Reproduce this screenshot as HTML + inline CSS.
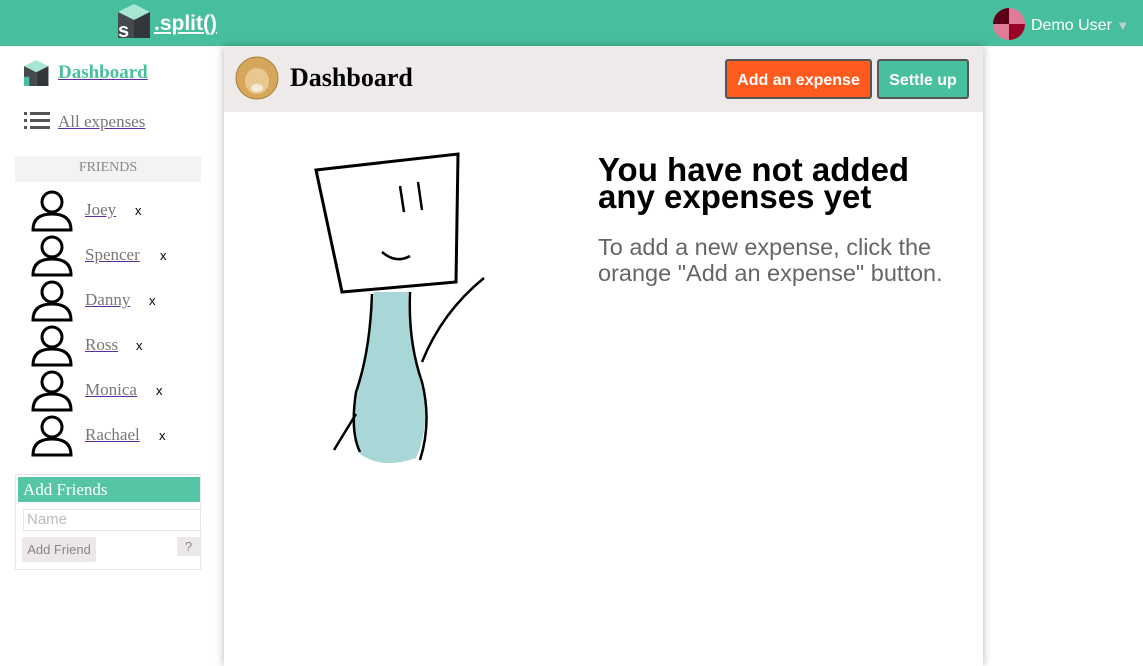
<!DOCTYPE html>
<html><head><meta charset="utf-8"><style>
*{margin:0;padding:0;box-sizing:border-box}
body{width:1143px;height:649px;overflow:hidden;background:#fff;font-family:"Liberation Serif",serif;position:relative}
.top{position:absolute;left:0;top:0;width:1143px;height:46px;background:#47bf9e}
.logo{position:absolute;left:118px;top:4px}
.brand{position:absolute;left:154px;top:12px;color:#fff;font:bold 21px "Liberation Sans",sans-serif;text-decoration:underline}
.user{position:absolute;left:993px;top:8px;color:#fff;font:16px "Liberation Sans",sans-serif}
.user span{position:absolute;left:38px;top:9px;white-space:nowrap}
.side a{color:#777;text-decoration:underline;text-decoration-color:#5a2ca0}
.dash{position:absolute;left:58px;top:62px;font-size:19px;font-weight:bold;color:#48bf9e!important}
.allexp{position:absolute;left:58px;top:112px;font-size:17px}
.fh{position:absolute;left:15px;top:156px;width:186px;height:26px;background:#f3f3f3;color:#888;font-size:14px;text-align:center;line-height:24px}
.fr{position:absolute;left:30px;height:45px}
.fr svg{position:absolute;left:0;top:0}
.fr a{position:absolute;left:55px;top:12px;font-size:17px}
.fr b{position:absolute;top:15px;font:13px "Liberation Sans",sans-serif;color:#000}
.af{position:absolute;left:15px;top:474px;width:186px;height:96px;border:1px solid #e8e8e8}
.afh{position:absolute;left:2px;top:2px;width:182px;height:25px;background:#55c5a5;color:#fff;font-size:17px;padding-left:5px;line-height:25px}
.inp{position:absolute;left:7px;top:34px;width:178px;height:22px;border:1px solid #e5e5e5;color:#bbb;font:15px "Liberation Sans",sans-serif;padding-left:3px;line-height:20px}
.btn{position:absolute;background:#ece8e7;color:#888;font:13px "Liberation Sans",sans-serif;border-radius:2px}
.main{position:absolute;left:224px;top:46px;width:759px;height:620px;background:#fff;box-shadow:0 0 8px rgba(0,0,0,.3)}
.mh{position:absolute;left:0;top:0;width:759px;height:66px;background:#eeeae9}
.mh h1{position:absolute;left:66px;top:17px;font-size:26px;font-weight:bold}
.b1{position:absolute;left:501px;top:13px;width:147px;height:40px;background:#ff5b1f;border:2px solid #555;border-radius:3px;color:#fff;font:bold 16px "Liberation Sans",sans-serif;text-align:center;line-height:39px}
.b2{position:absolute;left:653px;top:13px;width:92px;height:40px;background:#48bf9e;border:2px solid #555;border-radius:3px;color:#fff;font:bold 16px "Liberation Sans",sans-serif;text-align:center;line-height:39px}
.t1{position:absolute;left:374px;top:110px;font:bold 33px/27px "Liberation Sans",sans-serif;color:#000;white-space:nowrap}
.t2{position:absolute;left:374px;top:188px;font:23.5px/26px "Liberation Sans",sans-serif;color:#666;white-space:nowrap}
</style></head><body>
<div class="top">
<svg class="logo" width="34" height="34" viewBox="0 0 34 34"><polygon points="0,8 16,0 32,8 16,16" fill="#a8e6d4"/><polygon points="0,8 16,16 16,34 0,34" fill="#454a4f"/><polygon points="16,16 32,8 32,34 16,34" fill="#33373b"/><text x="0" y="33" font-family="Liberation Sans" font-weight="bold" font-size="20" fill="#fff">s</text></svg>
<div class="brand">.split()</div>
<div class="user"><svg width="32" height="32" viewBox="0 0 32 32"><clipPath id="c"><circle cx="16" cy="16" r="16"/></clipPath><g clip-path="url(#c)"><rect width="32" height="32" fill="#e07b98"/><rect width="16" height="16" fill="#5a0018"/><rect x="16" y="16" width="16" height="16" fill="#9b0025"/></g></svg><span>Demo User <span style="position:static;color:#ccc;font-size:13px">▼</span></span></div>
</div>
<div class="side">
<svg style="position:absolute;left:24px;top:59px" width="26" height="28" viewBox="0 0 34 34"><polygon points="0,8 16,0 32,8 16,16" fill="#a8e6d4"/><polygon points="0,8 16,16 16,34 0,34" fill="#454a4f"/><polygon points="16,16 32,8 32,34 16,34" fill="#33373b"/><rect x="0" y="22" width="7" height="12" fill="#48bf9e"/></svg>
<a class="dash">Dashboard</a>
<svg style="position:absolute;left:24px;top:111px" width="26" height="20"><g fill="#555"><rect x="0" y="1" width="3" height="3"/><rect x="0" y="8" width="3" height="3"/><rect x="0" y="15" width="3" height="3"/><rect x="6" y="1" width="20" height="3"/><rect x="6" y="8" width="20" height="3"/><rect x="6" y="15" width="20" height="3"/></g></svg>
<a class="allexp">All expenses</a>
<div class="fh">FRIENDS</div>
<div class="fr" style="top:188px"><svg width="44" height="44" viewBox="0 0 44 44"><circle cx="22" cy="14" r="10" fill="none" stroke="#000" stroke-width="3"/><path d="M3 42 Q3 26 22 26 Q41 26 41 42 Z" fill="none" stroke="#000" stroke-width="3"/></svg><a>Joey</a><b style="left:105px">x</b></div>
<div class="fr" style="top:233px"><svg width="44" height="44" viewBox="0 0 44 44"><circle cx="22" cy="14" r="10" fill="none" stroke="#000" stroke-width="3"/><path d="M3 42 Q3 26 22 26 Q41 26 41 42 Z" fill="none" stroke="#000" stroke-width="3"/></svg><a>Spencer</a><b style="left:130px">x</b></div>
<div class="fr" style="top:278px"><svg width="44" height="44" viewBox="0 0 44 44"><circle cx="22" cy="14" r="10" fill="none" stroke="#000" stroke-width="3"/><path d="M3 42 Q3 26 22 26 Q41 26 41 42 Z" fill="none" stroke="#000" stroke-width="3"/></svg><a>Danny</a><b style="left:119px">x</b></div>
<div class="fr" style="top:323px"><svg width="44" height="44" viewBox="0 0 44 44"><circle cx="22" cy="14" r="10" fill="none" stroke="#000" stroke-width="3"/><path d="M3 42 Q3 26 22 26 Q41 26 41 42 Z" fill="none" stroke="#000" stroke-width="3"/></svg><a>Ross</a><b style="left:106px">x</b></div>
<div class="fr" style="top:368px"><svg width="44" height="44" viewBox="0 0 44 44"><circle cx="22" cy="14" r="10" fill="none" stroke="#000" stroke-width="3"/><path d="M3 42 Q3 26 22 26 Q41 26 41 42 Z" fill="none" stroke="#000" stroke-width="3"/></svg><a>Monica</a><b style="left:126px">x</b></div>
<div class="fr" style="top:413px"><svg width="44" height="44" viewBox="0 0 44 44"><circle cx="22" cy="14" r="10" fill="none" stroke="#000" stroke-width="3"/><path d="M3 42 Q3 26 22 26 Q41 26 41 42 Z" fill="none" stroke="#000" stroke-width="3"/></svg><a>Rachael</a><b style="left:129px">x</b></div>
<div class="af"><div class="afh">Add Friends</div><div class="inp">Name</div>
<div class="btn" style="left:6px;top:62px;width:74px;height:25px;line-height:25px;text-align:center">Add Friend</div>
<div class="btn" style="left:161px;top:62px;width:23px;height:19px;line-height:19px;text-align:center">?</div></div>
</div>
<div class="main">
<div class="mh">
<svg style="position:absolute;left:11px;top:10px" width="44" height="44"><circle cx="22" cy="22" r="21" fill="#d6a75a" stroke="#a88040"/><ellipse cx="22" cy="25" rx="12" ry="13" fill="#e8c88e"/><ellipse cx="22" cy="32" rx="6" ry="4" fill="#f5ecd8"/></svg>
<h1>Dashboard</h1>
<div class="b1">Add an expense</div><div class="b2">Settle up</div>
</div>
<svg style="position:absolute;left:88px;top:106px" width="176" height="316" viewBox="0 0 176 316">
<rect width="176" height="316" fill="#fff"/>
<path d="M62 140 Q58 190 46 230 Q36 270 48 302 Q70 318 104 306 Q120 270 108 228 Q96 190 96 140 Z" fill="#a9d6d6"/>
<path d="M4 18 L146 2 L144 130 L30 140 Z" fill="#fff" stroke="#000" stroke-width="3"/>
<path d="M88 34 L92 60 M106 30 L110 58 M70 100 Q84 112 98 104" fill="none" stroke="#000" stroke-width="2.5"/>
<path d="M60 142 Q58 200 44 240 Q38 280 48 300 M98 140 Q96 190 110 230 Q120 270 108 308" fill="none" stroke="#000" stroke-width="2.5"/>
<path d="M110 210 Q130 160 172 126 M44 262 L22 298" fill="none" stroke="#000" stroke-width="2.5"/>
</svg>
<div class="t1">You have not added<br>any expenses yet</div>
<div class="t2">To add a new expense, click the<br>orange "Add an expense" button.</div>
</div>
</body></html>
